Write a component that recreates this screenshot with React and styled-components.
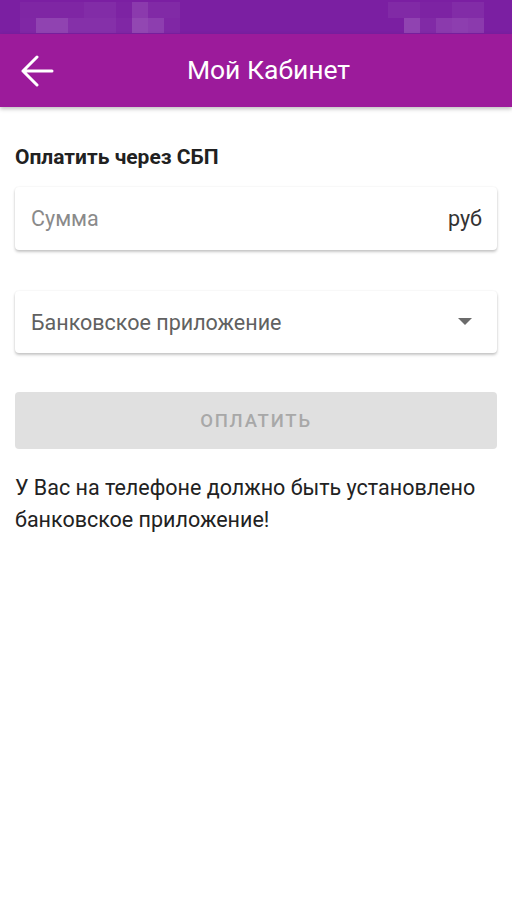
import React from "react";
import styled, { createGlobalStyle } from "styled-components";

const Global = createGlobalStyle`
  html, body {
    margin: 0;
    padding: 0;
    background: #ffffff;
    font-family: Roboto, "Noto Sans", Arial, sans-serif;
  }
  * { box-sizing: border-box; }
`;

const Page = styled.div`
  width: 512px;
  min-height: 917px;
  display: flex;
  flex-direction: column;
  background: #fff;
`;

const StatusBar = styled.div`
  height: 34px;
  background: #7b1fa2;
  display: flex;
  justify-content: space-between;
  padding: 2px 28px 0 20px;
`;

const Mosaic = styled.div`
  display: grid;
  grid-template-columns: repeat(${(p) => p.$cols}, 16px);
  grid-auto-rows: 15.5px;
`;

const Cell = styled.div`
  background: rgba(255, 255, 255, ${(p) => p.$a});
`;

const AppBar = styled.div`
  height: 73px;
  background: #9c1b9b;
  display: flex;
  align-items: center;
  position: relative;
  box-shadow: 0 2px 4px rgba(0, 0, 0, 0.25);
  z-index: 1;
`;

const BackButton = styled.button`
  border: none;
  background: none;
  padding: 0;
  margin-left: 19px;
  width: 36px;
  height: 34px;
  display: flex;
  align-items: center;
  justify-content: center;
`;

const Title = styled.div`
  flex: 1;
  text-align: center;
  color: #fff;
  font-size: 26.5px;
  margin-right: 30px;
  margin-top: -3px;
`;

const Content = styled.div`
  padding: 38px 15px 0 15px;
  display: flex;
  flex-direction: column;
`;

const SectionTitle = styled.div`
  font-size: 21px;
  font-weight: 700;
  color: #212121;
  margin-bottom: 18px;
`;

const Field = styled.div`
  height: ${(p) => p.$h}px;
  background: #fff;
  border-radius: 4px;
  box-shadow: 0 2px 3px rgba(0, 0, 0, 0.22), 0 0 2px rgba(0, 0, 0, 0.08);
  display: flex;
  align-items: center;
  justify-content: space-between;
  padding: 0 15px 0 16px;
  margin-bottom: ${(p) => p.$gap}px;
`;

const Placeholder = styled.span`
  font-size: 21.5px;
  color: ${(p) => p.$dark ? "#616161" : "#8a8a8a"};
`;

const Suffix = styled.span`
  font-size: 21.5px;
  color: #333;
`;

const PayButton = styled.button`
  height: 57px;
  border: none;
  border-radius: 4px;
  background: #e0e0e0;
  color: #a8a8a8;
  font-family: inherit;
  font-size: 18.5px;
  font-weight: 500;
  letter-spacing: 1.8px;
  margin-bottom: 23px;
`;

const Note = styled.p`
  margin: 0;
  font-size: 21.5px;
  line-height: 32px;
  color: #222;
`;

const leftCells = [
  0.03, 0.03, 0.03, 0.03, 0.06, 0.06, 0.02, 0.12, 0.05, 0.05,
  0.04, 0.16, 0.16, 0.08, 0.08, 0.08, 0.04, 0.18, 0.14, 0.04,
];
const rightCells = [
  0.05, 0.05, 0.02, 0.02, 0.06, 0.06,
  0.0, 0.16, 0.05, 0.12, 0.14, 0.12,
];

export default function App() {
  return (
    <Page>
      <Global />
      <StatusBar>
        <Mosaic $cols={10}>
          {leftCells.map((a, i) => <Cell key={i} $a={a} />)}
        </Mosaic>
        <Mosaic $cols={6}>
          {rightCells.map((a, i) => <Cell key={i} $a={a} />)}
        </Mosaic>
      </StatusBar>
      <AppBar>
        <BackButton aria-label="Назад">
          <svg width="34" height="32" viewBox="0 0 34 32" fill="none">
            <path d="M32 16H3M17 2L3 16l14 14" stroke="#fff" strokeWidth="3" strokeLinecap="round" strokeLinejoin="round" />
          </svg>
        </BackButton>
        <Title>Мой Кабинет</Title>
      </AppBar>
      <Content>
        <SectionTitle>Оплатить через СБП</SectionTitle>
        <Field $h={63} $gap={41}>
          <Placeholder>Сумма</Placeholder>
          <Suffix>руб</Suffix>
        </Field>
        <Field $h={62} $gap={39}>
          <Placeholder $dark>Банковское приложение</Placeholder>
          <svg width="14" height="8" viewBox="0 0 14 8" style={{ marginRight: 10 }}>
            <path d="M0 0h14L7 7z" fill="#6b6b6b" />
          </svg>
        </Field>
        <PayButton disabled>ОПЛАТИТЬ</PayButton>
        <Note>У Вас на телефоне должно быть установлено банковское приложение!</Note>
      </Content>
    </Page>
  );
}
